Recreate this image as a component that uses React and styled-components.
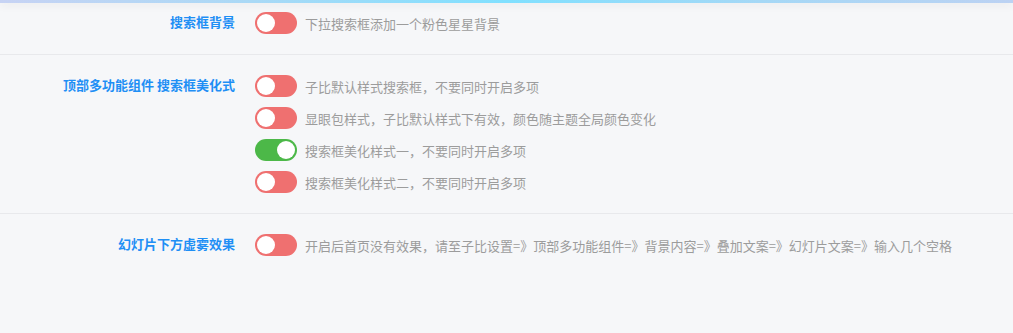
import React from "react";
import styled, { createGlobalStyle } from "styled-components";

const Global = createGlobalStyle`
  html, body { margin: 0; padding: 0; background: #f6f7f9; }
  body { font-family: "Noto Sans CJK SC", "Noto Sans", sans-serif; }
  * { box-sizing: border-box; }
`;

const Page = styled.div`
  width: 1013px;
  height: 333px;
  background: #f6f7f9;
  overflow: hidden;
`;

const TopBar = styled.div`
  position: relative;
  height: 3px;
  background: linear-gradient(90deg, #c7d3f4 0%, #a9d9f6 25%, #80e0ff 50%, #a5d8f6 75%, #bcd2f3 100%);
  box-shadow: 0 2px 8px rgba(0, 0, 0, 0.09);
`;

const Section = styled.div`
  display: grid;
  grid-template-columns: 235px 1fr;
  column-gap: 20px;
  padding: ${(p) => (p.$first ? "9px" : "20px")} 0 20px;
  border-bottom: ${(p) => (p.$last ? "none" : "1px solid #e8e9ec")};
`;

const Label = styled.div`
  text-align: right;
  font-size: 13px;
  font-weight: 700;
  color: #1f8ff5;
  line-height: 20px;
`;

const Options = styled.div`
  display: flex;
  flex-direction: column;
  gap: 10px;
`;

const Option = styled.div`
  display: flex;
  align-items: center;
  gap: 8px;
  height: 22px;
`;

const Switch = styled.div`
  flex: none;
  width: 42px;
  height: 22px;
  border-radius: 11px;
  background: ${(p) => (p.$on ? "#4cb848" : "#ef7070")};
  padding: 2px;
  display: flex;
  justify-content: ${(p) => (p.$on ? "flex-end" : "flex-start")};
`;

const Knob = styled.div`
  width: 18px;
  height: 18px;
  border-radius: 50%;
  background: #fff;
`;

const Desc = styled.span`
  font-size: 13px;
  color: #9c9c9c;
  white-space: nowrap;
`;

const sections = [
  {
    label: "搜索框背景",
    options: [{ text: "下拉搜索框添加一个粉色星星背景", on: false }],
  },
  {
    label: "顶部多功能组件 搜索框美化式",
    options: [
      { text: "子比默认样式搜索框，不要同时开启多项", on: false },
      { text: "显眼包样式，子比默认样式下有效，颜色随主题全局颜色变化", on: false },
      { text: "搜索框美化样式一，不要同时开启多项", on: true },
      { text: "搜索框美化样式二，不要同时开启多项", on: false },
    ],
  },
  {
    label: "幻灯片下方虚雾效果",
    options: [
      {
        text: "开启后首页没有效果，请至子比设置=》顶部多功能组件=》背景内容=》叠加文案=》幻灯片文案=》输入几个空格",
        on: false,
      },
    ],
  },
];

export default function App() {
  return (
    <Page>
      <Global />
      <TopBar />
      {sections.map((s, i) => (
        <Section key={i} $first={i === 0} $last={i === sections.length - 1}>
          <Label>{s.label}</Label>
          <Options>
            {s.options.map((o, j) => (
              <Option key={j}>
                <Switch $on={o.on}>
                  <Knob />
                </Switch>
                <Desc>{o.text}</Desc>
              </Option>
            ))}
          </Options>
        </Section>
      ))}
    </Page>
  );
}
